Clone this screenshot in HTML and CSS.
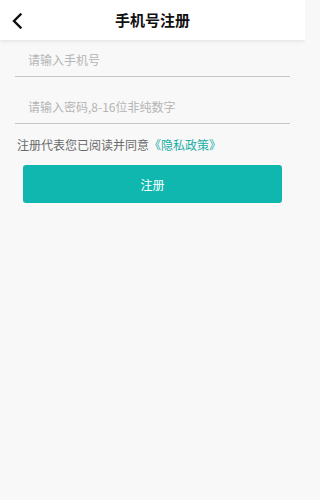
FILE: index.html
```html
<!DOCTYPE html>
<html lang="zh">
<head>
<meta charset="utf-8">
<link rel="stylesheet" href="styles.css">
</head>
<body>
<header class="bar">
  <svg class="back" width="12" height="16" viewBox="0 0 12 16"><path d="M9.5 1.5 L3 8 L9.5 14.5" fill="none" stroke="#111" stroke-width="2.4" stroke-linecap="square" stroke-linejoin="miter"/></svg>
  <h1 class="title">手机号注册</h1>
</header>
<main class="form">
  <div class="field"><span class="ph">请输入手机号</span></div>
  <div class="field field2"><span class="ph">请输入密码,8-16位非纯数字</span></div>
  <p class="agree">注册代表您已阅读并同意<span class="link">《隐私政策》</span></p>
  <div class="btn">注册</div>
</main>
</body>
</html>
```
FILE: styles.css
```css
html, body { margin: 0; padding: 0; }
html { background: #f8f8f8; }
body {
  background: #f8f8f8;
  font-family: "Noto Sans CJK SC", "Noto Sans", sans-serif;
  width: 305px;
  min-height: 500px;
}
.bar {
  height: 40px;
  background: #fff;
  box-shadow: 0 1px 4px rgba(0,0,0,0.10);
  display: flex;
  align-items: center;
  justify-content: center;
  position: relative;
}
.back {
  position: absolute;
  left: 11px;
  top: 13px;
}
.title {
  margin: 0;
  font-size: 15px;
  font-weight: bold;
  color: #111;
  line-height: 20px;
}
.form { display: flex; flex-direction: column; }
.field {
  margin: 0 15px;
  box-sizing: border-box;
  height: 37px;
  border-bottom: 1px solid #c6c6c6;
  display: flex;
  align-items: center;
  padding: 3px 0 0 13px;
}
.field2 { margin-top: 10px; }
.ph { font-size: 12px; color: #b5b5b5; line-height: 16px; }
.agree {
  margin: 13px 0 0 17px;
  font-size: 12px;
  line-height: 16px;
  color: #6a6a6a;
}
.link { color: #1aaea6; }
.btn {
  margin: 12px 23px 0;
  height: 38px;
  background: #10b7af;
  border-radius: 3px;
  color: #fff;
  font-size: 12px;
  display: flex;
  align-items: center;
  justify-content: center;
}
```
